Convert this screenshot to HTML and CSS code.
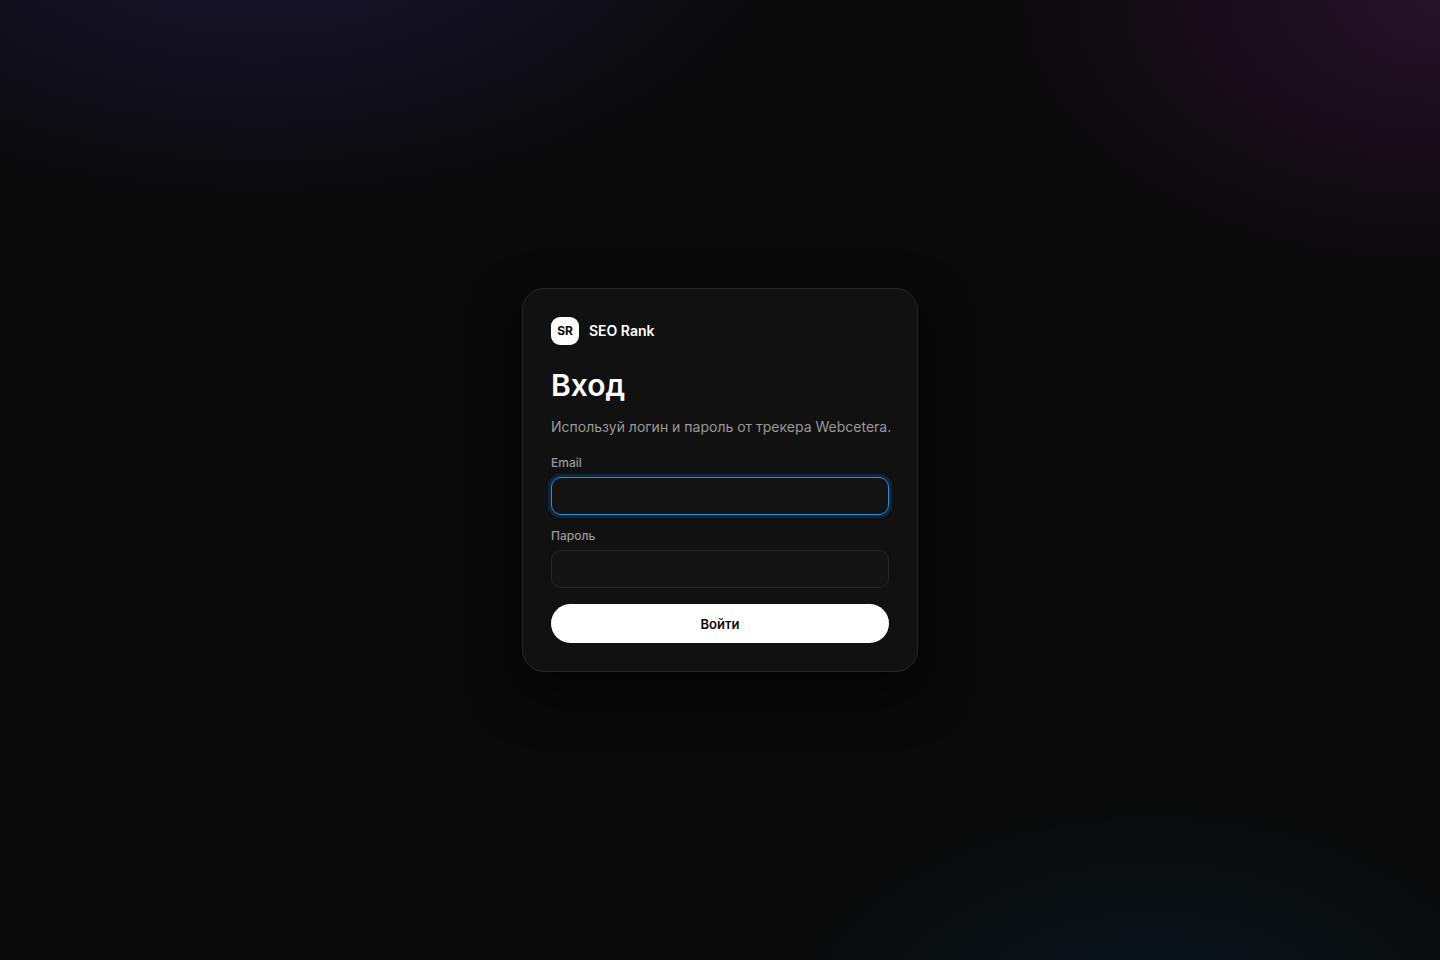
FILE: index.html
```html
<!DOCTYPE html>
<html lang="ru">
<head>
  <meta charset="UTF-8">
  <meta name="viewport" content="width=device-width, initial-scale=1.0">
  <title>Вход — SEO Rank</title>
  <link rel="stylesheet" href="styles.css">
</head>
<body>
  <main class="login">
    <form class="card" method="post" action="#">
      <div class="brand">
        <span class="brand-mark">SR</span>
        <span class="brand-name">SEO Rank</span>
      </div>
      <h1>Вход</h1>
      <p class="hint">Используй логин и пароль от трекера Webcetera.</p>
      <div class="field">
        <label for="email">Email</label>
        <input id="email" name="email" type="email" autocomplete="username" required autofocus>
      </div>
      <div class="field">
        <label for="password">Пароль</label>
        <input id="password" name="password" type="password" autocomplete="current-password" required>
      </div>
      <button class="btn" type="submit">Войти</button>
    </form>
  </main>
</body>
</html>
```
FILE: styles.css
```css
:root {
  --bg: #090909;
  --card: #111111;
  --field: #141414;
  --line: #262626;
  --text: #ffffff;
  --muted: #999999;
  --accent: #2b8fd6;
}

* {
  box-sizing: border-box;
}

body {
  margin: 0;
  background:
    radial-gradient(900px 500px at 18% -10%, rgba(116, 92, 255, 0.18), transparent 62%),
    radial-gradient(800px 500px at 100% 0%, rgba(217, 70, 239, 0.14), transparent 56%),
    radial-gradient(750px 500px at 80% 110%, rgba(0, 170, 255, 0.1), transparent 53%),
    var(--bg);
  color: var(--text);
  font-family: Inter, "Noto Sans", sans-serif;
  font-size: 14px;
}

.login {
  min-height: 100vh;
  display: grid;
  place-items: center;
  padding: 24px;
}

.card {
  width: 100%;
  max-width: 396px;
  padding: 28px;
  background: var(--card);
  border: 1px solid var(--line);
  border-radius: 22px;
  box-shadow: 0 20px 50px rgba(0, 0, 0, 0.5);
}

.brand {
  display: flex;
  align-items: center;
  gap: 10px;
  margin-bottom: 20px;
}

.brand-mark {
  display: grid;
  place-items: center;
  width: 28px;
  height: 28px;
  border-radius: 9px;
  background: #ffffff;
  color: #090909;
  font-size: 12px;
  font-weight: 700;
  line-height: 14px;
}

.brand-name {
  font-weight: 600;
  line-height: 18px;
}

h1 {
  margin: 0 0 11px;
  font-size: 30px;
  font-weight: 600;
  line-height: 40px;
}

.hint {
  margin: 0 0 18px;
  color: var(--muted);
  line-height: 22px;
}

/* keep the hint on one line while the card has its full width */
@media (min-width: 440px) {
  .hint {
    white-space: nowrap;
  }
}

.field {
  display: flex;
  flex-direction: column;
  gap: 7px;
  margin-bottom: 14px;
}

.field label {
  color: var(--muted);
  font-size: 12px;
  font-weight: 500;
  line-height: 14px;
}

.field input {
  width: 100%;
  height: 38px;
  padding: 0 12px;
  background: var(--field);
  border: 1px solid var(--line);
  border-radius: 10px;
  color: var(--text);
  font: inherit;
  outline: none;
}

.field input:focus {
  border-color: var(--accent);
  box-shadow: 0 0 0 3px rgba(0, 112, 200, 0.25);
}

.btn {
  width: 100%;
  height: 39px;
  margin-top: 2px;
  border: 0;
  border-radius: 20px;
  background: #ffffff;
  color: #090909;
  font: 600 13px Inter, "Noto Sans", sans-serif;
  cursor: pointer;
}
```
